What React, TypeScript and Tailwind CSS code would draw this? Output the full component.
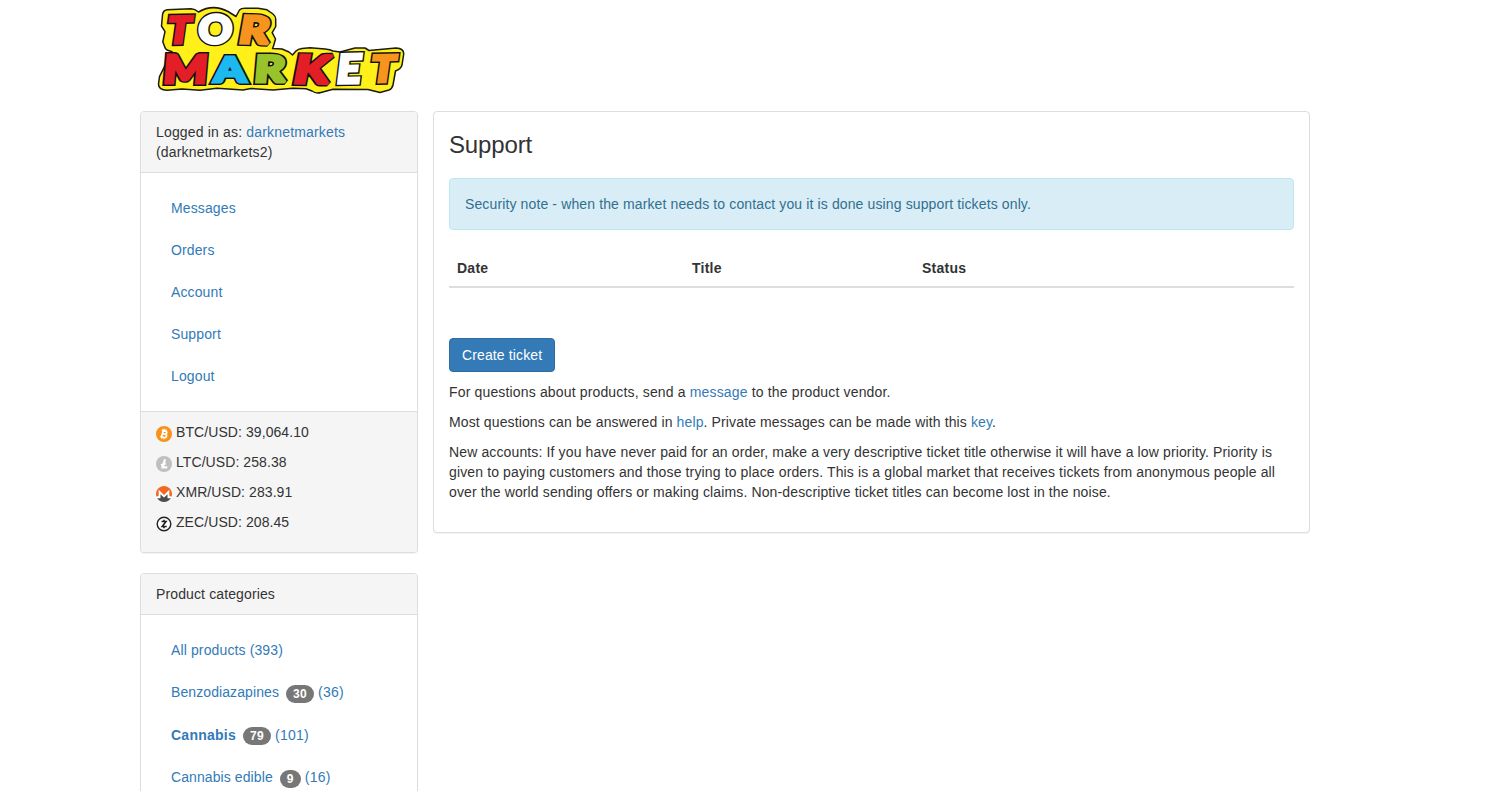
import React from 'react';

type Letter = { ch: string; x: number; y: number; w: number; size: number; fill: string; skew?: number; rot?: number };

const letters: Letter[] = [
  { ch: 'T', x: 11.5, y: 43.2, w: 23, size: 36.5, fill: '#e31e26', skew: -9, rot: -1 },
  { ch: 'O', x: 43, y: 43.2, w: 33.5, size: 38.5, fill: '#ffffff', skew: -3 },
  { ch: 'R', x: 82.5, y: 42.8, w: 30, size: 37.5, fill: '#f7941d', skew: -8, rot: 2 },
  { ch: 'M', x: 7.5, y: 83, w: 44, size: 38.5, fill: '#e31e26', skew: -5 },
  { ch: 'A', x: 59, y: 81.7, w: 32, size: 35, fill: '#1cb8f0' },
  { ch: 'R', x: 98.5, y: 81.8, w: 31, size: 36.5, fill: '#98c32b', skew: -5 },
  { ch: 'K', x: 137, y: 83, w: 35, size: 38.5, fill: '#e31e26', skew: -10, rot: 1 },
  { ch: 'E', x: 180.5, y: 83.2, w: 24, size: 39.5, fill: '#ffffff', skew: -8, rot: -1 },
  { ch: 'T', x: 215, y: 82, w: 24, size: 36.5, fill: '#f7941d', skew: -9, rot: -1 },
];

const layers: { stroke?: string; width: number }[] = [{ stroke: '#111111', width: 6 }, { width: 3.2 }];

function Logo() {
  return (
    <svg width="250" height="100" viewBox="0 0 250 100" className="block overflow-visible" aria-label="Tor Market">
      <path
        d="M12 9.8L36 8.8Q40 9 43.5 12Q58 3.5 73 11.5L81 16.5L84.5 10Q86 8.3 90 8.3H103L112 9.8L118 14Q120.5 16 120.7 19V26.5L117.2 32.7L120.5 39L118.5 46L117.5 48.5L127 49L134 52L137.5 55L141 51Q143 49 147 48.5L155 47.7L170 49Q175 49.5 178 51L185 52L200 48L210 48L214 50.5L241 48Q249 48.5 248.7 54L247 65Q246 69 240.5 71L238 85Q237 89 234 90L225 92.5L213 89.5L178 89.3L166 92.5Q161 94 157 91L151 88.7L138 88.3L118 90L96 88.5L88 90L62 88.3L45 90.3L27 89L12 90.3Q3.5 90 3.5 84L4.5 76.7L17 51.7L12 50Q10 48.5 9.4 46L7.8 41.7L10 31.7L6.5 26L7.5 15Q8 10.5 12 9.8Z"
        fill="#fff01a"
        stroke="#1a1a10"
        strokeWidth="1.5"
        strokeLinejoin="round"
      />
      {layers.map((layer, i) => (
        <g key={i}>
          {letters.map((l, j) => (
            <text
              key={j}
              x="0"
              y="0"
              fontFamily="Lato, sans-serif"
              fontWeight="900"
              fontSize={l.size}
              textLength={l.w}
              lengthAdjust="spacingAndGlyphs"
              transform={`translate(${l.x} ${l.y}) rotate(${l.rot ?? 0}) skewX(${l.skew ?? 0})`}
              fill={layer.stroke ?? l.fill}
              stroke={layer.stroke ?? l.fill}
              strokeWidth={layer.width}
              strokeLinejoin="miter"
              strokeMiterlimit="2"
            >
              {l.ch}
            </text>
          ))}
        </g>
      ))}
    </svg>
  );
}

const coin = 'mt-0.5 inline-block h-4 w-4 align-middle';

function Btc() {
  return (
    <svg viewBox="0 0 32 32" className={coin}>
      <circle cx="16" cy="16" r="16" fill="#f7931a" />
      <g transform="rotate(14 16 16)" fill="none" stroke="#fff">
        <path d="M12.8 9v14M10 9.6h7.5a3 3 0 0 1 0 6.2h-5M12.5 15.8h6a3.3 3.3 0 0 1 0 6.8H10" strokeWidth="3.4" />
        <path d="M13.8 5.5V9M18 5.5V9M13.8 23v3.5M18 23v3.5" strokeWidth="2.2" />
      </g>
    </svg>
  );
}

function Ltc() {
  return (
    <svg viewBox="0 0 32 32" className={coin}>
      <circle cx="16" cy="16" r="16" fill="#bfbfbf" />
      <path d="M18 6.5L13.2 22.6H22.6M10 18.6l9.4-4" fill="none" stroke="#fff" strokeWidth="4.6" />
    </svg>
  );
}

function Xmr() {
  return (
    <svg viewBox="0 0 32 32" className={coin}>
      <path d="M16 0A16 16 0 0 0 .8 21H5.6V8L16 18.5 26.4 8v13h4.8A16 16 0 0 0 16 0z" fill="#f26822" />
      <path d="M.8 21H5.6V8L16 18.5 26.4 8v13h4.8l-1.6 3.4H23v-8L16 23.2l-7-6.8v8H2.4z" fill="#fff" />
      <path d="M13.6 20.8L9 16.4v8H2.4a16 16 0 0 0 27.2 0H23v-8l-4.6 4.4L16 23.2z" fill="#4d4d4d" />
    </svg>
  );
}

function Zec() {
  return (
    <svg viewBox="0 0 32 32" className={coin}>
      <circle cx="16" cy="16" r="13.6" fill="#fff" stroke="#222" strokeWidth="2.8" />
      <path d="M11 11H20L12.4 21H21.4M16 7.5V11M16 21v3.5" fill="none" stroke="#222" strokeWidth="3.2" />
    </svg>
  );
}

const rates = [
  { Icon: Btc, text: 'BTC/USD: 39,064.10' },
  { Icon: Ltc, text: 'LTC/USD: 258.38' },
  { Icon: Xmr, text: 'XMR/USD: 283.91' },
  { Icon: Zec, text: 'ZEC/USD: 208.45' },
];

const categories = [
  { name: 'Benzodiazapines', badge: 30, count: 36 },
  { name: 'Cannabis', badge: 79, count: 101, bold: true },
  { name: 'Cannabis edible', badge: 9, count: 16 },
];

function Link({ children }: { children: React.ReactNode }) {
  return <a href="#" className="text-[#337ab7]">{children}</a>;
}

const panel = 'rounded border border-[#ddd] bg-white shadow-[0_1px_1px_rgba(0,0,0,0.05)]';
const heading = 'rounded-t-[3px] border-b border-[#ddd] bg-[#f5f5f5] px-[15px] py-2.5';
const navItem = 'block px-[15px] py-2.5 text-[#337ab7]';

export default function App() {
  return (
    <div className="h-[791px] w-full overflow-hidden bg-white font-['Liberation_Sans',Arial,sans-serif] text-[14px] leading-5 tracking-[0.125px] text-[#333]">
      <div className="ml-[140px] w-[1170px]">
        <header className="h-[111px] pl-[15px]">
          <Logo />
        </header>
        <div className="flex items-start gap-[15px]">
          <aside className="flex w-[278px] shrink-0 flex-col gap-5">
            <section className={panel}>
              <div className={`${heading} tracking-[0.17px]`}>
                Logged in as: <Link>darknetmarkets</Link>
                <br />
                (darknetmarkets2)
              </div>
              <nav className="flex flex-col gap-0.5 p-[15px]">
                {['Messages', 'Orders', 'Account', 'Support', 'Logout'].map((t) => (
                  <a key={t} href="#" className={navItem}>{t}</a>
                ))}
              </nav>
              <div className="rounded-b-[3px] border-t border-[#ddd] bg-[#f5f5f5] px-[15px] py-2.5 tracking-[0.08px]">
                {rates.map(({ Icon, text }) => (
                  <p key={text} className="mb-2.5 h-5 whitespace-nowrap">
                    <Icon /> {text}
                  </p>
                ))}
              </div>
            </section>
            <section className={panel}>
              <div className={heading}>Product categories</div>
              <nav className="flex flex-col gap-0.5 p-[15px]">
                <a href="#" className={`${navItem} mb-[0.45px]`}>All products (393)</a>
                {categories.map((c) => (
                  <a key={c.name} href="#" className={`${navItem} last:pt-[10.3px]`}>
                    {c.bold ? (
                      <b className="tracking-[0.25px]">{c.name}</b>
                    ) : (
                      <span className="tracking-[0.09px]">{c.name}</span>
                    )}{' '}
                    <span className="ml-[3px] inline-block min-w-2.5 rounded-[10px] bg-[#777] px-[7px] py-[3px] text-center align-middle text-[12px] leading-none font-bold tracking-[0.32px] text-white">
                      {c.badge}
                    </span>{' '}
                    <span className="tracking-[0.2px]">({c.count})</span>
                  </a>
                ))}
              </nav>
            </section>
          </aside>
          <main className={`${panel} h-[422px] w-[877px] shrink-0 px-[15px] pt-5`}>
            <h3 className="mb-5 h-[26px] text-[24px] leading-[26.4px] tracking-[-0.15px]">Support</h3>
            <div className="mb-5 rounded border border-[#bce8f1] bg-[#d9edf7] p-[15px] text-[#31708f]">
              Security note - when the market needs to contact you it is done using support tickets only.
            </div>
            <div className="mb-[50px] grid grid-cols-[235px_230px_1fr] border-b-2 border-[#ddd] font-bold tracking-[0.25px]">
              <div className="p-2">Date</div>
              <div className="p-2">Title</div>
              <div className="p-2">Status</div>
            </div>
            <button className="mb-2.5 block h-[34px] w-[106px] rounded border border-[#2e6da4] bg-[#337ab7] px-3 whitespace-nowrap text-white">
              Create ticket
            </button>
            <p className="mb-2.5 tracking-[0.155px]">
              For questions about products, send a <Link>message</Link> to the product vendor.
            </p>
            <p className="mb-2.5 tracking-[0.125px]">
              Most questions can be answered in <Link>help</Link>. Private messages can be made with this <Link>key</Link>.
            </p>
            <p className="tracking-[0.13px]">
              New accounts: If you have never paid for an order, make a very descriptive ticket title otherwise it will
              have a low priority. Priority is given to paying customers and those trying to place orders. This is a
              global market that receives tickets from anonymous people all over the world sending offers or making
              claims. Non-descriptive ticket titles can become lost in the noise.
            </p>
          </main>
        </div>
      </div>
    </div>
  );
}
